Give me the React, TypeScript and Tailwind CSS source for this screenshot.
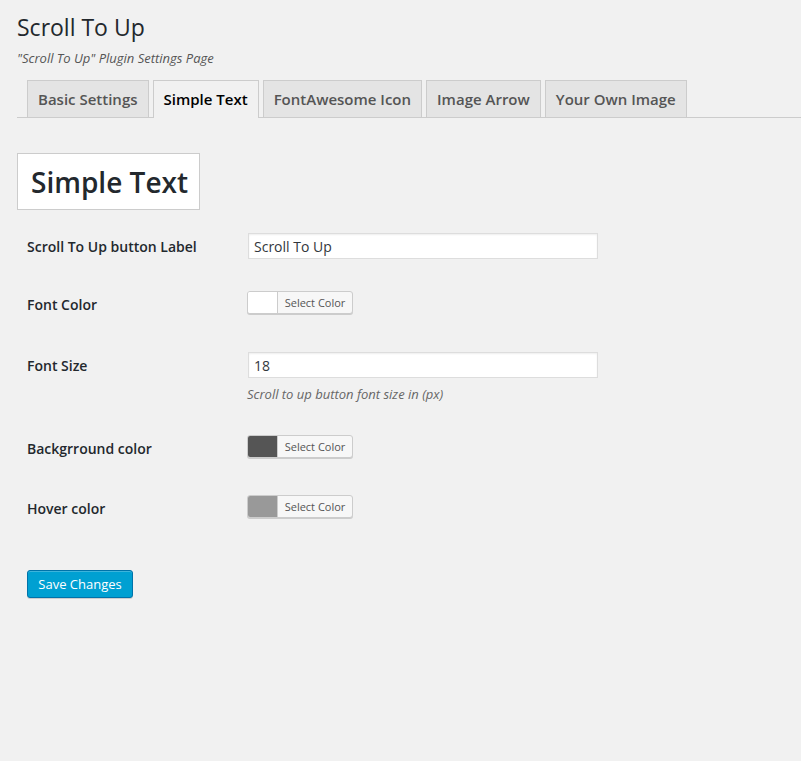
import React from 'react';

const tabs = ['Basic Settings', 'Simple Text', 'FontAwesome Icon', 'Image Arrow', 'Your Own Image'];

function ColorButton({ color }: { color: string }) {
    return (
        <button
            type="button"
            className="flex h-[23px] w-[106px] items-stretch overflow-hidden rounded-[3px] border border-[#ccc] bg-[#f7f7f7] p-0 shadow-[0_1px_0_#ccc]"
        >
            <span className="w-[30px] border-r border-[#ccc]" style={{ backgroundColor: color }} />
            <span className="flex flex-1 items-center justify-center text-[11px] leading-none text-[#555]">Select Color</span>
        </button>
    );
}

function Row({ label, children, className, labelClass = '' }: { label: string; children: React.ReactNode; className: string; labelClass?: string }) {
    return (
        <div className={`flex ${className}`}>
            <div className={`flex h-[26px] w-[220px] shrink-0 items-center text-[14px] font-semibold leading-[19px] text-[#23282d] ${labelClass}`}>{label}</div>
            <div className="flex flex-col">{children}</div>
        </div>
    );
}

export default function App() {
    return (
        <div className="min-h-[761px] w-full bg-[#f1f1f1] pl-[17px] font-['Open_Sans',sans-serif] text-[#444]">
            <h1 className="pt-[13px] text-[23px] font-normal leading-[29px] text-[#23282d]">Scroll To Up</h1>
            <p className="mt-[7px] text-[13px] italic leading-[18px] text-[#555]">"Scroll To Up" Plugin Settings Page</p>

            {/* tabs */}
            <div className="mt-[13px] flex gap-[4px] border-b border-[#ccc] pl-[10px]">
                {tabs.map((t) => {
                    const active = t === 'Simple Text';
                    return (
                        <div
                            key={t}
                            className={
                                active
                                    ? '-mb-px border border-b-0 border-[#ccc] bg-[#f1f1f1] px-[10px] pb-[7px] pt-[6px] text-[15px] font-semibold leading-[24px] text-black'
                                    : 'border border-b-0 border-[#ccc] bg-[#e4e4e4] px-[10px] pb-[6px] pt-[6px] text-[15px] font-semibold leading-[24px] text-[#555]'
                            }
                        >
                            {t}
                        </div>
                    );
                })}
            </div>

            <div className="mt-[35px] flex h-[57px] w-[183px] items-center border border-[#ccc] bg-white px-[13px]">
                <h2 className="whitespace-nowrap text-[28px] font-semibold leading-none text-[#23282d]">Simple Text</h2>
            </div>

            <div className="pl-[10px]">
                <Row label="Scroll To Up button Label" className="mt-[23px] items-center">
                    <input
                        type="text"
                        defaultValue="Scroll To Up"
                        className="ml-px h-[26px] w-[350px] border border-[#ddd] bg-white px-[5px] text-[14px] text-[#32373c] shadow-[inset_0_1px_2px_rgba(0,0,0,0.07)] outline-none"
                    />
                </Row>

                <Row label="Font Color" className="mt-[30px] items-center" labelClass="pt-[4px]">
                    <ColorButton color="#ffffff" />
                </Row>

                <Row label="Font Size" className="mt-[37px] items-start">
                    <input
                        type="text"
                        defaultValue="18"
                        className="ml-px h-[26px] w-[350px] border border-[#ddd] bg-white px-[5px] text-[14px] text-[#32373c] shadow-[inset_0_1px_2px_rgba(0,0,0,0.07)] outline-none"
                    />
                    <p className="mt-[7px] text-[13px] italic leading-[18px] text-[#666]">Scroll to up button font size in (px)</p>
                </Row>

                <Row label="Backgrround color" className="mt-[30px] items-center" labelClass="pt-[4px]">
                    <ColorButton color="#555555" />
                </Row>

                <Row label="Hover color" className="mt-[34px] items-center" labelClass="pt-[4px]">
                    <ColorButton color="#999999" />
                </Row>

                <button
                    type="button"
                    className="mt-[51px] h-[28px] w-[106px] rounded-[3px] border border-[#0073aa] bg-[#00a0d2] px-[10px] text-[13px] leading-[26px] text-white shadow-[inset_0_1px_0_rgba(120,200,230,0.5),0_1px_0_rgba(0,0,0,0.15)]"
                >
                    Save Changes
                </button>
            </div>
        </div>
    );
}
